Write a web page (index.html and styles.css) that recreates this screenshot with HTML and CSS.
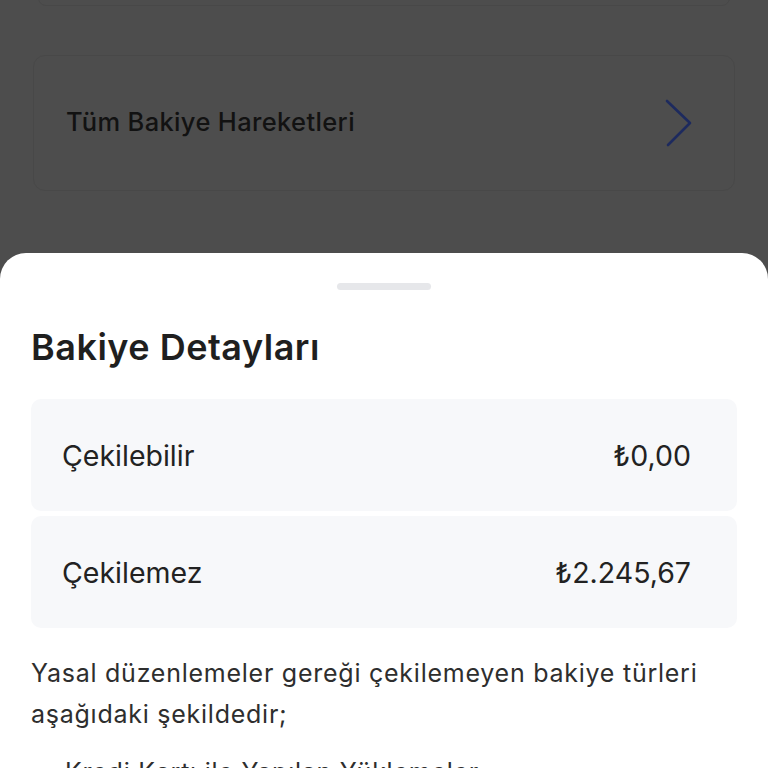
FILE: index.html
```html
<!DOCTYPE html>
<html lang="tr">
<head>
<meta charset="utf-8">
<link rel="stylesheet" href="styles.css">
</head>
<body>
<div class="page">
  <div class="top-card"></div>
  <div class="link-card">
    <span class="link-text">Tüm Bakiye Hareketleri</span>
    <svg class="chev" width="28" height="48" viewBox="0 0 28 48"><path d="M2 2 L25 24 L3 46" fill="none" stroke="#1d2a5e" stroke-width="2.6" stroke-linecap="round" stroke-linejoin="round"/></svg>
  </div>
</div>
<div class="sheet">
  <div class="handle"></div>
  <h1 class="title">Bakiye Detayları</h1>
  <div class="rows">
    <div class="row"><span>Çekilebilir</span><span>₺0,00</span></div>
    <div class="row"><span>Çekilemez</span><span>₺2.245,67</span></div>
  </div>
  <p class="note">Yasal düzenlemeler gereği çekilemeyen bakiye türleri aşağıdaki şekildedir;</p>
  <ul class="list">
    <li>Kredi Kartı ile Yapılan Yüklemeler</li>
  </ul>
</div>
</body>
</html>
```
FILE: styles.css
```css
* { box-sizing: border-box; }
html, body { margin: 0; padding: 0; }
body {
  width: 768px;
  height: 768px;
  overflow: hidden;
  background: #4d4d4d;
  font-family: Inter, "Noto Sans", sans-serif;
  display: flex;
  flex-direction: column;
}
.page {
  flex: none;
  height: 253px;
  padding: 0 33px;
  display: flex;
  flex-direction: column;
}
.top-card {
  flex: none;
  height: 16px;
  margin: -10px 5px 0;
  border: 1px solid #484848;
  border-radius: 12px;
}
.link-card {
  flex: none;
  margin-top: 49px;
  height: 136px;
  border: 1px solid #484848;
  border-radius: 12px;
  display: flex;
  align-items: center;
  justify-content: space-between;
  padding: 0 41px 0 32px;
}
.link-text {
  font-size: 25.5px;
  font-weight: 500;
  color: #121212;
  letter-spacing: 0.35px;
  margin-top: -4px;
}
.chev { margin-top: 0; }
.sheet {
  flex: 1;
  min-height: 0;
  background: #fff;
  border-radius: 26px 26px 0 0;
  padding: 30px 31px 0;
  display: flex;
  flex-direction: column;
}
.handle {
  flex: none;
  width: 94px;
  height: 7px;
  border-radius: 4px;
  background: #e6e7ea;
  align-self: center;
}
.title {
  margin: 33px 0 0;
  font-size: 36px;
  font-weight: 600;
  color: #1f1f1f;
  line-height: 48px;
  letter-spacing: 0.5px;
}
.rows {
  margin-top: 28px;
  display: flex;
  flex-direction: column;
  gap: 5px;
}
.row {
  flex: none;
  height: 112px;
  background: #f7f8fa;
  border-radius: 10px;
  display: flex;
  align-items: center;
  justify-content: space-between;
  padding: 0 46px 0 31px;
  font-size: 28.5px;
  color: #222;
}
.note {
  margin: 25px 0 0;
  font-size: 25px;
  line-height: 41px;
  color: #2e2e2e;
  letter-spacing: 0.75px;
}
.list {
  margin: 17px 0 0;
  padding-left: 34px;
  font-size: 25px;
  line-height: 41px;
  color: #2e2e2e;
  letter-spacing: 0.75px;
}
```
